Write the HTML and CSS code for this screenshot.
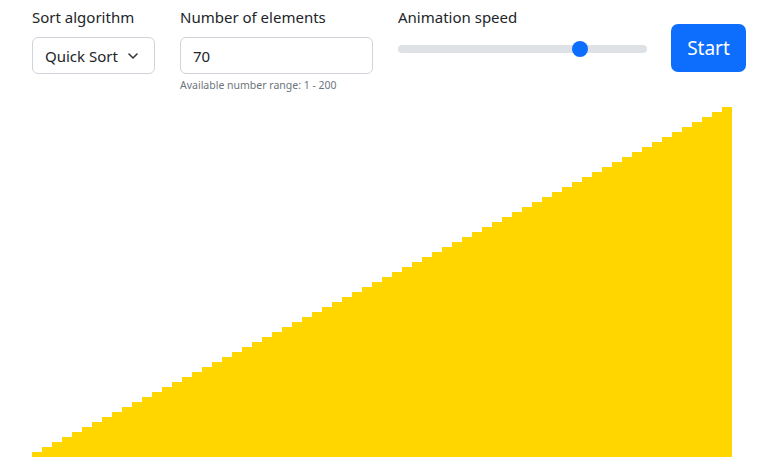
FILE: index.html
```html
<!DOCTYPE html>
<html lang="en">
<head>
<meta charset="utf-8">
<title>Sorting Visualizer</title>
<link rel="stylesheet" href="styles.css">
</head>
<body>
<div class="page">
  <div class="controls">
    <div class="field">
      <label class="label">Sort algorithm</label>
      <div class="select">
        <span>Quick Sort</span>
        <svg class="chev" width="10" height="6" viewBox="0 0 10 6"><path d="M1 1l4 4 4-4" fill="none" stroke="#343a40" stroke-width="1.6" stroke-linecap="round" stroke-linejoin="round"/></svg>
      </div>
    </div>
    <div class="field">
      <label class="label">Number of elements</label>
      <div class="input">70</div>
      <div class="help">Available number range: 1 - 200</div>
    </div>
    <div class="field">
      <label class="label">Animation speed</label>
      <div class="range">
        <div class="track"></div>
        <div class="thumb"></div>
      </div>
    </div>
    <button class="btn">Start</button>
  </div>
  <div class="chart">
    <div class="bar" style="height:5px"></div><div class="bar" style="height:10px"></div><div class="bar" style="height:15px"></div><div class="bar" style="height:20px"></div><div class="bar" style="height:25px"></div><div class="bar" style="height:30px"></div><div class="bar" style="height:35px"></div><div class="bar" style="height:40px"></div><div class="bar" style="height:45px"></div><div class="bar" style="height:50px"></div>
    <div class="bar" style="height:55px"></div><div class="bar" style="height:60px"></div><div class="bar" style="height:65px"></div><div class="bar" style="height:70px"></div><div class="bar" style="height:75px"></div><div class="bar" style="height:80px"></div><div class="bar" style="height:85px"></div><div class="bar" style="height:90px"></div><div class="bar" style="height:95px"></div><div class="bar" style="height:100px"></div>
    <div class="bar" style="height:105px"></div><div class="bar" style="height:110px"></div><div class="bar" style="height:115px"></div><div class="bar" style="height:120px"></div><div class="bar" style="height:125px"></div><div class="bar" style="height:130px"></div><div class="bar" style="height:135px"></div><div class="bar" style="height:140px"></div><div class="bar" style="height:145px"></div><div class="bar" style="height:150px"></div>
    <div class="bar" style="height:155px"></div><div class="bar" style="height:160px"></div><div class="bar" style="height:165px"></div><div class="bar" style="height:170px"></div><div class="bar" style="height:175px"></div><div class="bar" style="height:180px"></div><div class="bar" style="height:185px"></div><div class="bar" style="height:190px"></div><div class="bar" style="height:195px"></div><div class="bar" style="height:200px"></div>
    <div class="bar" style="height:205px"></div><div class="bar" style="height:210px"></div><div class="bar" style="height:215px"></div><div class="bar" style="height:220px"></div><div class="bar" style="height:225px"></div><div class="bar" style="height:230px"></div><div class="bar" style="height:235px"></div><div class="bar" style="height:240px"></div><div class="bar" style="height:245px"></div><div class="bar" style="height:250px"></div>
    <div class="bar" style="height:255px"></div><div class="bar" style="height:260px"></div><div class="bar" style="height:265px"></div><div class="bar" style="height:270px"></div><div class="bar" style="height:275px"></div><div class="bar" style="height:280px"></div><div class="bar" style="height:285px"></div><div class="bar" style="height:290px"></div><div class="bar" style="height:295px"></div><div class="bar" style="height:300px"></div>
    <div class="bar" style="height:305px"></div><div class="bar" style="height:310px"></div><div class="bar" style="height:315px"></div><div class="bar" style="height:320px"></div><div class="bar" style="height:325px"></div><div class="bar" style="height:330px"></div><div class="bar" style="height:335px"></div><div class="bar" style="height:340px"></div><div class="bar" style="height:345px"></div><div class="bar" style="height:350px"></div>
  </div>
</div>
</body>
</html>
```

FILE: styles.css
```css
* { box-sizing: border-box; }
html, body { margin: 0; padding: 0; background: #fff; }
body {
  font-family: "Noto Sans", "Open Sans", sans-serif;
  font-size: 15px;
  color: #212529;
}
.page { padding: 5px 0 0 32px; }
.controls {
  display: flex;
  align-items: flex-start;
  gap: 25px;
  height: 93px;
}
.field { display: flex; flex-direction: column; align-items: flex-start; }
.label {
  display: block;
  line-height: 24px;
  height: 24px;
  margin-bottom: 8px;
  white-space: nowrap;
}
.select {
  width: 123px;
  height: 37px;
  border: 1px solid #ced4da;
  border-radius: 6px;
  display: flex;
  align-items: center;
  padding: 0 16px 0 12px;
  justify-content: space-between;
}
.chev { width: 10px; height: 6px; }
.input {
  width: 193px;
  height: 37px;
  border: 1px solid #ced4da;
  border-radius: 6px;
  padding: 0 12px;
  display: flex;
  align-items: center;
}
.help {
  margin-top: 3px;
  font-size: 10.5px;
  line-height: 16px;
  color: #6c757d;
  white-space: nowrap;
}
.range {
  position: relative;
  width: 249px;
  height: 24px;
  display: flex;
  align-items: center;
}
.track {
  width: 100%;
  height: 8px;
  border-radius: 4px;
  background: #dee2e6;
}
.thumb {
  position: absolute;
  left: 174px;
  top: 4px;
  width: 16px;
  height: 16px;
  border-radius: 50%;
  background: #0d6efd;
}
.btn {
  margin-left: -1px;
  margin-top: 19px;
  width: 75px;
  height: 48px;
  border: none;
  border-radius: 7px;
  background: #0d6efd;
  color: #fff;
  font-family: inherit;
  font-size: 19px;
  padding: 0 0 1px;
}
.chart {
  display: flex;
  align-items: flex-end;
  height: 350px;
  margin-top: 9px;
}
.bar {
  width: 10px;
  flex: none;
  background: #ffd600;
}
```
